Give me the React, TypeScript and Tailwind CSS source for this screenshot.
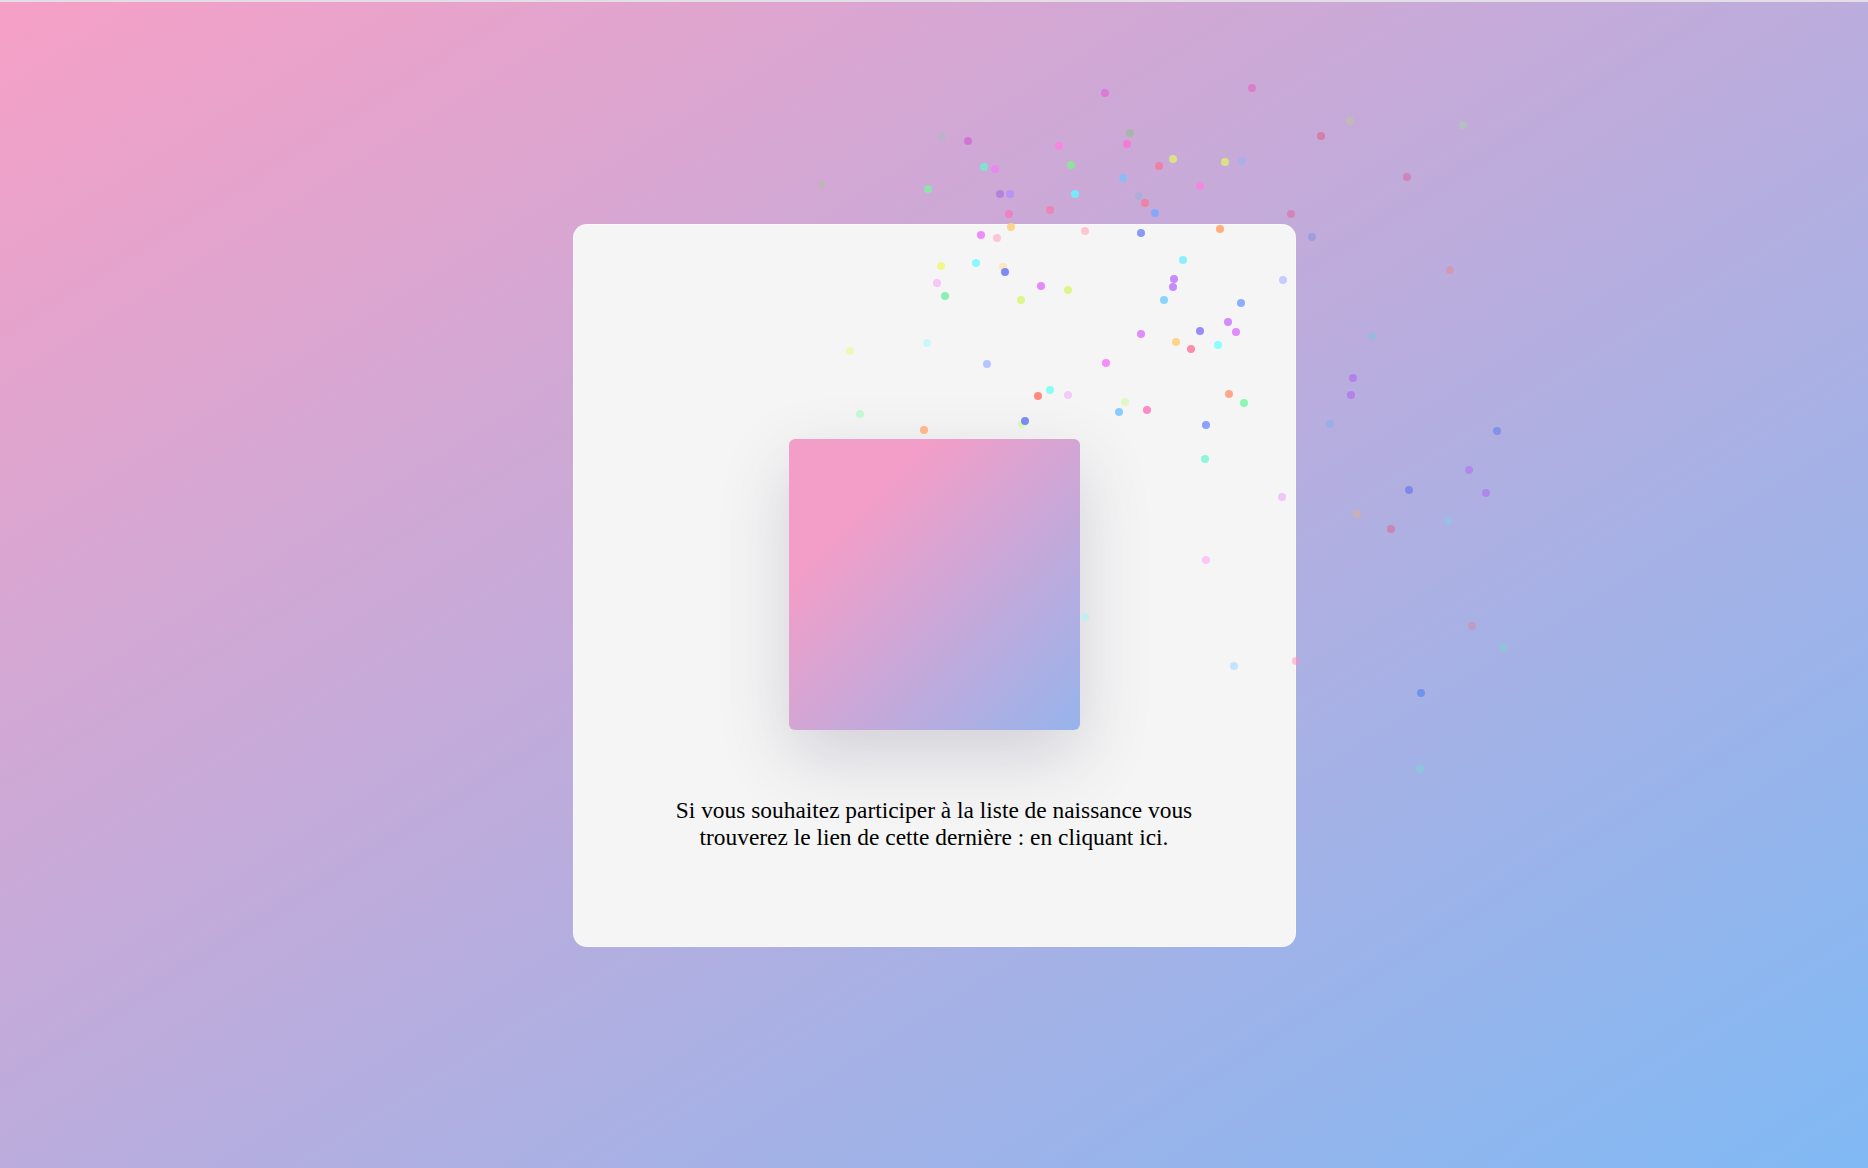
// confetti dots: [x, y, colour, opacity] in page pixels
const confetti: [number, number, string, number][] = [
  // over the background
  [1105, 91, "#e070d8", 0.8],
  [1252, 86, "#e070c0", 0.7],
  [1350, 119, "#c0d080", 0.4],
  [1321, 134, "#e06090", 0.6],
  [1463, 123, "#a0e0a0", 0.4],
  [1407, 175, "#e06098", 0.5],
  [822, 183, "#b0c0a0", 0.4],
  [942, 135, "#a0c0c0", 0.5],
  [968, 139, "#d060d0", 0.7],
  [1059, 144, "#ff80e0", 0.8],
  [1130, 131, "#90c090", 0.6],
  [1127, 142, "#ff70d0", 0.8],
  [984, 165, "#70f0d0", 0.8],
  [995, 167, "#f080f8", 0.8],
  [1071, 163, "#80f090", 0.8],
  [1159, 164, "#ff7090", 0.7],
  [1173, 157, "#e0f070", 0.8],
  [1225, 160, "#e0f070", 0.8],
  [1242, 159, "#a0b0f0", 0.7],
  [928, 187, "#80f0a0", 0.8],
  [1000, 192, "#b070e0", 0.7],
  [1010, 192, "#b090ff", 0.8],
  [1075, 192, "#70f0ff", 0.9],
  [1123, 176, "#80c0ff", 0.8],
  [1139, 194, "#a0b0e0", 0.6],
  [1145, 201, "#ff7090", 0.7],
  [1155, 211, "#80a8ff", 0.9],
  [1200, 184, "#ff80e0", 0.8],
  [1009, 212, "#ff70c0", 0.7],
  [1050, 208, "#ff70a0", 0.6],
  [1291, 212, "#e06098", 0.5],
  [1312, 235, "#8090e0", 0.5],
  [1450, 268, "#f08080", 0.4],
  [1372, 334, "#80c0e0", 0.5],
  [1353, 376, "#b070f0", 0.7],
  [1351, 393, "#b070f0", 0.7],
  [1330, 422, "#80b0f0", 0.5],
  [1497, 429, "#6080f0", 0.6],
  [1469, 468, "#b070f0", 0.6],
  [1486, 491, "#b070f0", 0.6],
  [1409, 488, "#6070f0", 0.6],
  [1357, 512, "#e0b090", 0.5],
  [1391, 527, "#e06080", 0.5],
  [1448, 519, "#80d0f0", 0.5],
  [1472, 624, "#e08090", 0.4],
  [1503, 645, "#70e0c0", 0.4],
  [1421, 691, "#5080f0", 0.6],
  [1420, 767, "#70e0d0", 0.4],
  [1296, 659, "#ff90c0", 0.5],
  // over the card
  [1011, 225, "#ffd080", 0.9],
  [981, 233, "#f080ff", 0.9],
  [997, 236, "#ffc0d8", 0.9],
  [1085, 229, "#ffc0d0", 0.9],
  [1141, 231, "#8090f8", 0.9],
  [1220, 227, "#ffa870", 0.9],
  [941, 264, "#f0f880", 0.9],
  [976, 261, "#80f8ff", 0.9],
  [1003, 265, "#ffe0b0", 0.7],
  [1005, 270, "#7080f0", 0.9],
  [937, 281, "#f8c0f8", 0.9],
  [945, 294, "#80f0b0", 0.9],
  [1041, 284, "#e080ff", 0.9],
  [1068, 288, "#d8f880", 0.9],
  [1021, 298, "#d8f880", 0.9],
  [1183, 258, "#80f0ff", 0.9],
  [1174, 277, "#c080ff", 0.9],
  [1173, 285, "#c080ff", 0.9],
  [1164, 298, "#80d0ff", 0.9],
  [1283, 278, "#c0c8ff", 0.9],
  [1241, 301, "#80a8ff", 0.9],
  [1228, 320, "#d080ff", 0.9],
  [1236, 330, "#e080ff", 0.9],
  [1200, 329, "#8c80f8", 0.9],
  [1218, 343, "#80ffff", 0.9],
  [1176, 340, "#ffd080", 0.9],
  [1191, 347, "#ff80a0", 0.9],
  [1141, 332, "#e080ff", 0.9],
  [1106, 361, "#f880ff", 0.9],
  [850, 349, "#f0f8b0", 0.9],
  [927, 341, "#c8f8f8", 0.9],
  [987, 362, "#b0c0ff", 0.9],
  [1038, 394, "#ff7f70", 0.9],
  [1050, 388, "#80fff0", 0.9],
  [1068, 393, "#f0c8f8", 0.9],
  [1125, 400, "#e0f8c0", 0.9],
  [1119, 410, "#80c8ff", 0.9],
  [1147, 408, "#ff80c0", 0.9],
  [1229, 392, "#ffa080", 0.9],
  [1244, 401, "#80f8b0", 0.9],
  [1206, 423, "#8098ff", 0.9],
  [1205, 457, "#80f8d8", 0.9],
  [860, 412, "#c0f8d0", 0.9],
  [924, 428, "#ffb080", 0.9],
  [1022, 422, "#d8f8b0", 0.9],
  [1025, 419, "#7080f0", 0.9],
  [1282, 495, "#f0c0f8", 0.9],
  [1206, 558, "#ffc0f8", 0.9],
  [1234, 664, "#c0e0ff", 0.9],
  [1085, 615, "#c0f0f0", 0.9],
];

export default function App() {
  return (
    <div className="relative min-h-screen w-full overflow-hidden border-t-2 border-[#e3dde5] bg-[linear-gradient(to_bottom_right,#f6a0c6,#80b9f4)] flex items-center justify-center">
      {/* Card */}
      <div className="w-[723px] h-[723px] rounded-[14px] bg-[#f5f5f5] border border-white/40 flex flex-col items-center pt-[214px]">
        <div className="w-[291px] h-[291px] rounded-md bg-[linear-gradient(135deg,#f29ec8_25%,#96b4ec)] shadow-[0_26px_70px_rgba(70,60,100,0.2)]" />
        <p className="mt-[67px] w-[560px] text-center font-['Liberation_Serif',serif] text-[23.4px] leading-[27px] text-black">
          Si vous souhaitez participer à la liste de naissance vous trouverez le lien de cette dernière : en cliquant ici.
        </p>
      </div>

      {/* Confetti */}
      <div className="pointer-events-none absolute inset-0">
        {confetti.map(([x, y, c, o], i) => (
          <span
            key={i}
            className="absolute w-[8px] h-[8px] rounded-full blur-[0.4px]"
            style={{ left: x - 4, top: y - 4, backgroundColor: c, opacity: o }}
          />
        ))}
      </div>
    </div>
  );
}
